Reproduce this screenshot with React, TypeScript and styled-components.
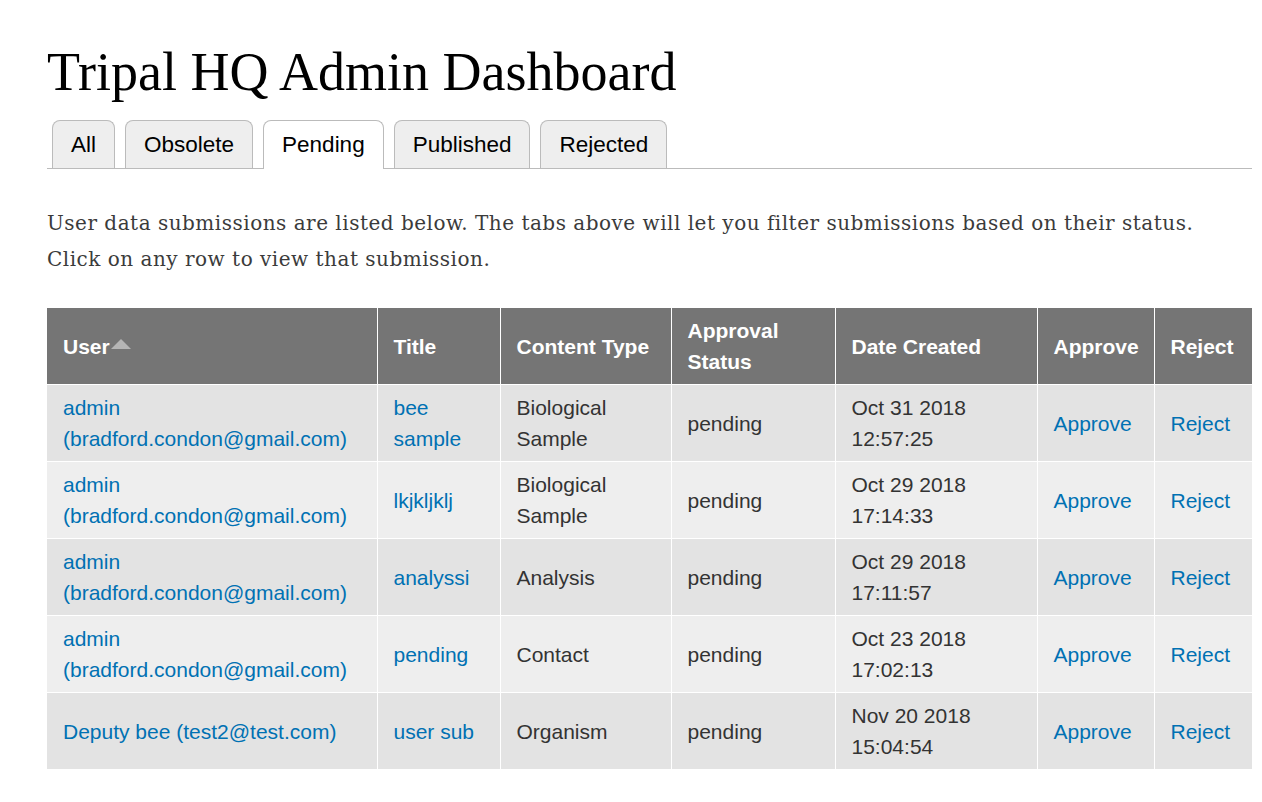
import React from "react";
import styled, { createGlobalStyle } from "styled-components";

const GlobalStyle = createGlobalStyle`
  html, body { margin: 0; padding: 0; background: #ffffff; }
  body { font-family: "Liberation Sans", Arial, sans-serif; }
`;

const Page = styled.div`
  padding: 40px 10px 30px 47px;
`;

const Title = styled.h1`
  margin: 0 0 16px 0;
  font-family: "Liberation Serif", "Times New Roman", serif;
  font-weight: normal;
  font-size: 54px;
  line-height: 64px;
  color: #000;
`;

const TabBar = styled.ul`
  display: flex;
  gap: 10px;
  list-style: none;
  margin: 0;
  padding: 0 0 0 5px;
  border-bottom: 1px solid #bbbbbb;
  height: 48px;
  align-items: flex-end;
`;

const Tab = styled.li<{ $active?: boolean }>`
  box-sizing: border-box;
  padding: 0 18px;
  display: flex;
  align-items: center;
  border: 1px solid #bbbbbb;
  border-bottom: none;
  border-radius: 8px 8px 0 0;
  background: ${(p) => (p.$active ? "#ffffff" : "#eeeeee")};
  margin-bottom: ${(p) => (p.$active ? "-1px" : "0")};
  height: ${(p) => (p.$active ? "49px" : "48px")};
  font-size: 22.5px;
  color: #000;
`;

const Intro = styled.p`
  margin: 36px 0 31px 0;
  font-family: "DejaVu Serif", Georgia, serif;
  font-size: 20px;
  letter-spacing: 0.5px;
  line-height: 36px;
  color: #3b3b3b;
`;

const Table = styled.table`
  width: 1205px;
  border-collapse: collapse;
  table-layout: fixed;
  font-size: 21px;
  line-height: 31px;
`;

const HeadCell = styled.th`
  background: #757575;
  color: #ffffff;
  font-weight: bold;
  text-align: left;
  padding: 7px 16px;
  height: 76px;
  box-sizing: border-box;
  border-left: 1px solid #ffffff;
  border-bottom: 1px solid #ffffff;
  vertical-align: middle;
  &:first-child { border-left: none; }
`;

const SortArrow = styled.span`
  display: inline-block;
  width: 0;
  height: 0;
  border-left: 10px solid transparent;
  border-right: 10px solid transparent;
  border-bottom: 10px solid #b5b5b5;
  margin-left: 1px;
  vertical-align: 5px;
`;

const Row = styled.tr<{ $odd: boolean }>`
  background: ${(p) => (p.$odd ? "#e3e3e3" : "#eeeeee")};
`;

const Cell = styled.td`
  padding: 7px 16px;
  height: 77px;
  box-sizing: border-box;
  color: #333333;
  border-left: 1px solid #ffffff;
  border-bottom: 1px solid #ffffff;
  vertical-align: middle;
  &:first-child { border-left: none; }
`;

const Link = styled.a`
  color: #0071b3;
  text-decoration: none;
`;

const cols = [330, 123, 171, 164, 202, 117, 98];

const rows = [
  { user: ["admin", "(bradford.condon@gmail.com)"], title: ["bee", "sample"], type: ["Biological", "Sample"], date: ["Oct 31 2018", "12:57:25"] },
  { user: ["admin", "(bradford.condon@gmail.com)"], title: ["lkjkljklj"], type: ["Biological", "Sample"], date: ["Oct 29 2018", "17:14:33"] },
  { user: ["admin", "(bradford.condon@gmail.com)"], title: ["analyssi"], type: ["Analysis"], date: ["Oct 29 2018", "17:11:57"] },
  { user: ["admin", "(bradford.condon@gmail.com)"], title: ["pending"], type: ["Contact"], date: ["Oct 23 2018", "17:02:13"] },
  { user: ["Deputy bee (test2@test.com)"], title: ["user sub"], type: ["Organism"], date: ["Nov 20 2018", "15:04:54"] },
];

const Lines = ({ parts }: { parts: string[] }) => (
  <>
    {parts.map((p, i) => (
      <React.Fragment key={i}>
        {i > 0 && <br />}
        {p}
      </React.Fragment>
    ))}
  </>
);

export default function App() {
  return (
    <>
      <GlobalStyle />
      <Page>
        <Title>Tripal HQ Admin Dashboard</Title>
        <TabBar>
          <Tab>All</Tab>
          <Tab>Obsolete</Tab>
          <Tab $active>Pending</Tab>
          <Tab>Published</Tab>
          <Tab>Rejected</Tab>
        </TabBar>
        <Intro>
          User data submissions are listed below. The tabs above will let you filter submissions based on their status.
          <br />
          Click on any row to view that submission.
        </Intro>
        <Table>
          <colgroup>
            {cols.map((w, i) => (
              <col key={i} style={{ width: w }} />
            ))}
          </colgroup>
          <thead>
            <tr>
              <HeadCell>
                User<SortArrow />
              </HeadCell>
              <HeadCell>Title</HeadCell>
              <HeadCell>Content Type</HeadCell>
              <HeadCell>
                Approval
                <br />
                Status
              </HeadCell>
              <HeadCell>Date Created</HeadCell>
              <HeadCell>Approve</HeadCell>
              <HeadCell>Reject</HeadCell>
            </tr>
          </thead>
          <tbody>
            {rows.map((r, i) => (
              <Row key={i} $odd={i % 2 === 0}>
                <Cell>
                  <Link href="#">
                    <Lines parts={r.user} />
                  </Link>
                </Cell>
                <Cell>
                  <Link href="#">
                    <Lines parts={r.title} />
                  </Link>
                </Cell>
                <Cell>
                  <Lines parts={r.type} />
                </Cell>
                <Cell>pending</Cell>
                <Cell>
                  <Lines parts={r.date} />
                </Cell>
                <Cell>
                  <Link href="#">Approve</Link>
                </Cell>
                <Cell>
                  <Link href="#">Reject</Link>
                </Cell>
              </Row>
            ))}
          </tbody>
        </Table>
      </Page>
    </>
  );
}
